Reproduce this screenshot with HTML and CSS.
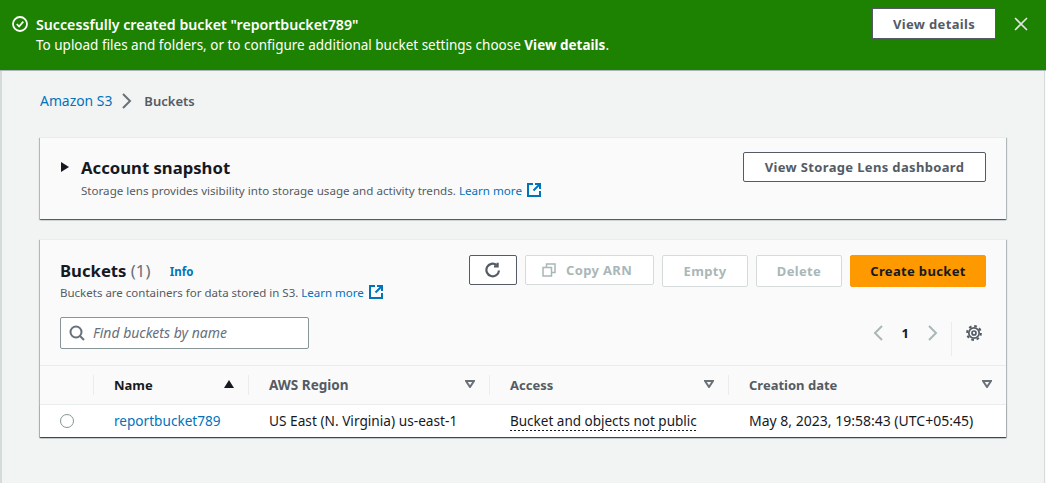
FILE: index.html
```html
<!DOCTYPE html>
<html lang="en">
<head>
    <meta charset="UTF-8">
    <title>S3 Buckets</title>
    <link rel="stylesheet" href="styles.css">
</head>
<body>
    <div class="flash">
        <svg class="flash-icon" width="16" height="16" viewBox="0 0 16 16"><circle cx="8" cy="8" r="7"/><path d="M4.800 8l2.300 2.500 4.200-4.800"/></svg>
        <div class="flash-text">
            <div class="flash-title">Successfully created bucket "reportbucket789"</div>
            <div>To upload files and folders, or to configure additional bucket settings choose <b>View details</b>.</div>
        </div>
        <button class="btn flash-btn">View details</button>
        <svg class="flash-close" width="16" height="16" viewBox="0 0 16 16"><path d="M2 2l12 12M14 2L2 14"/></svg>
    </div>

    <main class="content">
        <nav class="crumbs">
            <a href="#">Amazon S3</a>
            <svg width="12" height="16" viewBox="0 0 12 16"><path d="M2 1l7 7-7 7"/></svg>
            <span>Buckets</span>
        </nav>

        <section class="card snapshot">
            <span class="caret"></span>
            <div class="snapshot-text">
                <h2>Account snapshot</h2>
                <p class="desc">Storage lens provides visibility into storage usage and activity trends. <a href="#">Learn more</a>
                    <svg class="ext" width="16" height="16" viewBox="0 0 16 16"><path d="M7 2H2v12h12V9"/><path d="M9 2h5v5M14 2L7.500 8.500"/></svg>
                </p>
            </div>
            <button class="btn lens-btn">View Storage Lens dashboard</button>
        </section>

        <section class="card buckets">
            <div class="buckets-head">
                <div class="buckets-title">
                    <h2>Buckets <span class="count">(1)</span> <a class="info" href="#">Info</a></h2>
                    <p class="desc">Buckets are containers for data stored in S3. <a href="#">Learn more</a>
                        <svg class="ext" width="16" height="16" viewBox="0 0 16 16"><path d="M7 2H2v12h12V9"/><path d="M9 2h5v5M14 2L7.500 8.500"/></svg>
                    </p>
                </div>
                <div class="actions">
                    <button class="btn refresh"><svg width="16" height="16" viewBox="0 0 16 16"><path d="M14 8.500A6.300 6.300 0 1 1 11.600 3"/><path d="M12.600 .8v3.600H9"/></svg></button>
                    <button class="btn off copy"><svg width="14" height="14" viewBox="0 0 14 14"><path d="M1 4.500h8.500v8.500H1z"/><path d="M4.500 4.500V1H13v8.500H9.500"/></svg>Copy ARN</button>
                    <button class="btn off empty">Empty</button>
                    <button class="btn off delete">Delete</button>
                    <button class="btn create">Create bucket</button>
                </div>
            </div>

            <div class="tools">
                <div class="search">
                    <svg width="16" height="16" viewBox="0 0 16 16"><circle cx="7" cy="7" r="5.500"/><path d="M11 11l4 4"/></svg>
                    <span>Find buckets by name</span>
                </div>
                <div class="pager">
                    <svg width="10" height="16" viewBox="0 0 10 16"><path d="M9 1L2 8l7 7"/></svg>
                    <b>1</b>
                    <svg width="10" height="16" viewBox="0 0 10 16"><path d="M1 1l7 7-7 7"/></svg>
                    <span class="pager-gear">
                        <svg width="16" height="16" viewBox="0 0 16 16"><circle class="teeth" cx="8" cy="8" r="6.900"/><circle cx="8" cy="8" r="5.200"/><circle cx="8" cy="8" r="2"/></svg>
                    </span>
                </div>
            </div>

            <div class="row head-row">
                <div class="cell pick"></div>
                <div class="cell name">
                    <span class="sep"></span><b>Name</b>
                    <svg class="sort" width="10" height="8" viewBox="0 0 10 8"><path class="solid" d="M5 0l5 8H0z"/></svg>
                </div>
                <div class="cell region">
                    <span class="sep"></span><b>AWS Region</b>
                    <svg class="sort" width="10" height="8" viewBox="0 0 10 8"><path d="M1 1h8L5 7z"/></svg>
                </div>
                <div class="cell access">
                    <span class="sep"></span><b>Access</b>
                    <svg class="sort" width="10" height="8" viewBox="0 0 10 8"><path d="M1 1h8L5 7z"/></svg>
                </div>
                <div class="cell created">
                    <span class="sep"></span><b>Creation date</b>
                    <svg class="sort" width="10" height="8" viewBox="0 0 10 8"><path d="M1 1h8L5 7z"/></svg>
                </div>
            </div>
            <div class="row body-row">
                <div class="cell pick"><span class="radio"></span></div>
                <div class="cell name"><a href="#">reportbucket789</a></div>
                <div class="cell region">US East (N. Virginia) us-east-1</div>
                <div class="cell access"><span class="dotted">Bucket and objects not public</span></div>
                <div class="cell created">May 8, 2023, 19:58:43 (UTC+05:45)</div>
            </div>
        </section>
    </main>
</body>
</html>
```

FILE: styles.css
```css
html,
body {
    margin: 0;
    height: 483px;
    overflow: hidden;
}

body {
    font-family: "Noto Sans", sans-serif;
    font-size: 13.500px;
    line-height: 20px;
    color: #16191f;
    background-color: #fafafa;
}

a {
    color: #0073bb;
    text-decoration: none;
}

svg {
    fill: none;
    stroke-width: 2;
    flex: none;
}

button {
    font-family: inherit;
}

.btn {
    display: flex;
    align-items: center;
    justify-content: center;
    height: 30px;
    padding: 0;
    background-color: #fff;
    border: 1px solid #545b64;
    border-radius: 2px;
    color: #545b64;
    font-size: 13px;
    font-weight: 700;
    letter-spacing: 0.35px;
    box-sizing: border-box;
}

/* flash */
.flash {
    display: flex;
    height: 71px;
    padding: 8px 17px 0 12px;
    box-sizing: border-box;
    background-color: #1d8102;
    color: #fff;
    border-bottom: 1px solid #aab7b8;
    font-size: 13.500px;
}

.flash-icon {
    stroke: #fff;
    margin: 8px 8px 0 0;
    stroke-width: 1.800;
}

.flash-text {
    flex: 1;
    padding-top: 6px;
    line-height: 21px;
}

.flash-title {
    font-size: 14.200px;
    font-weight: 600;
}

.flash-btn {
    width: 124px;
    height: 31px;
    margin-right: 17px;
    border-radius: 0;
}

.flash-close {
    stroke: #e6e6e6;
    margin-top: 8px;
    stroke-width: 1.600;
}

/* page */
.content {
    height: 412px;
    margin-right: 1px;
    padding: 20px 38px 0 38px;
    box-sizing: border-box;
    background-color: #f2f3f3;
    border-left: 2px solid #d5dbdb;
    border-right: 1px solid #d5dbdb;
}

.crumbs {
    display: flex;
    align-items: center;
    gap: 9px;
    height: 20px;
    font-size: 13.900px;
}

.crumbs svg {
    stroke: #687078;
    margin-right: 2px;
}

.crumbs span {
    color: #545b64;
    font-size: 13px;
    font-weight: 600;
}

.card {
    background-color: #fafafa;
    box-shadow: 0 1px 1px 0 rgba(0, 28, 36, 0.5), 1px 1px 1px 0 rgba(0, 28, 36, 0.2), -1px 1px 1px 0 rgba(0, 28, 36, 0.2);
    border-top: 1px solid #eaeded;
}

h2 {
    margin: 0;
    font-size: 16.700px;
    line-height: 24px;
    font-weight: 700;
}

.desc {
    margin: 0;
    font-size: 11.600px;
    line-height: 16px;
    color: #545b64;
}

.ext {
    stroke: #0073bb;
    vertical-align: -3px;
    margin-left: 1px;
}

/* account snapshot */
.snapshot {
    display: flex;
    height: 82px;
    margin-top: 26px;
    box-sizing: border-box;
}

.caret {
    width: 0;
    height: 0;
    margin: 24px 12px 0 21px;
    border-left: 8px solid #16191f;
    border-top: 5px solid transparent;
    border-bottom: 5px solid transparent;
}

.snapshot-text {
    flex: 1;
    padding-top: 18px;
}

.snapshot-text .desc {
    margin-top: 2px;
}

.lens-btn {
    width: 243px;
    margin: 14px 20px 0 0;
}

/* buckets */
.buckets {
    height: 198px;
    margin-top: 20px;
    box-sizing: border-box;
}

.buckets-head {
    display: flex;
    padding: 15px 20px 0;
    height: 63px;
    box-sizing: border-box;
}

.buckets-title {
    flex: 1;
    padding-top: 4px;
}

.buckets-title .desc {
    font-size: 11.500px;
}

.count {
    font-weight: 400;
    color: #687078;
}

.info {
    margin-left: 15px;
    font-size: 11.500px;
    font-weight: 700;
    vertical-align: 1px;
}

.actions {
    display: flex;
    align-items: flex-start;
    gap: 8px;
}

.off {
    color: #aab7b8;
    border-color: #d5dbdb;
    height: 32px;
}

.refresh {
    width: 48px;
}

.refresh svg {
    stroke: #545b64;
    stroke-width: 2.200;
}

.copy {
    justify-content: flex-start;
    width: 129px;
    height: 30px;
    padding-left: 16px;
}

.copy svg {
    stroke: #aab7b8;
    stroke-width: 1.500;
    margin-right: 10px;
}

.empty,
.delete {
    width: 86px;
}

.create {
    width: 136px;
    height: 32px;
    background-color: #ff9900;
    border-color: #ff9900;
    color: #16191f;
}

.tools {
    display: flex;
    justify-content: space-between;
    align-items: center;
    padding: 0 24px 0 20px;
    height: 32px;
    margin-top: 14px;
}

.search {
    display: flex;
    align-items: center;
    gap: 8px;
    width: 249px;
    height: 32px;
    padding-left: 8px;
    box-sizing: border-box;
    background-color: #fff;
    border: 1px solid #879596;
    border-radius: 2px;
    color: #687078;
    font-size: 14px;
    font-style: italic;
}

.search svg {
    stroke: #687078;
}

.pager {
    display: flex;
    align-items: center;
    font-size: 13px;
}

.pager svg {
    stroke: #aab7b8;
}

.pager b {
    margin: 0 19px;
}

.pager-gear {
    display: flex;
    align-items: center;
    height: 34px;
    margin: 12px 0 0 13px;
    padding-left: 14px;
    border-left: 1px solid #eaeded;
}

.pager-gear svg {
    stroke: #545b64;
    stroke-width: 1.700;
    margin-top: -12px;
}

.pager-gear .teeth {
    stroke-width: 2;
    stroke-dasharray: 2.700 2.720;
}

/* table */
.row {
    display: grid;
    grid-template-columns: 53px 155px 241px 239px 278px;
}

.head-row {
    height: 40px;
    margin-top: 16px;
    box-sizing: border-box;
    border-top: 1px solid #eaeded;
    border-bottom: 1px solid #eaeded;
    font-size: 13px;
}

.body-row {
    height: 32px;
    background-color: #fff;
    font-size: 13.600px;
    box-shadow: 0 1px 1px 0 rgba(0, 28, 36, 0.3);
}

.cell {
    position: relative;
    display: flex;
    align-items: center;
    justify-content: space-between;
    padding: 0 14px 0 21px;
}

.head-row b {
    color: #545b64;
    font-weight: 700;
}

.head-row .region b {
    font-size: 13.500px;
}

.head-row .name b {
    color: #16191f;
}

.sep {
    position: absolute;
    left: 0;
    top: 9px;
    height: 20px;
    border-left: 1px solid #eaeded;
}

.sort {
    stroke: #687078;
    margin-top: -2px;
}

.sort .solid {
    fill: #16191f;
    stroke: none;
}

.pick {
    padding: 0 0 0 20px;
    justify-content: flex-start;
}

.radio {
    width: 12px;
    height: 12px;
    border: 1px solid #879596;
    border-radius: 50%;
    background-color: #fff;
}

.body-row .region {
    font-size: 13.700px;
}

.body-row .access {
    font-size: 13.500px;
}

.body-row .created {
    font-size: 14px;
}

.dotted {
    padding-bottom: 1px;
    line-height: 18px;
    background: repeating-linear-gradient(90deg, #16191f 0 2px, transparent 2px 4px) bottom / 100% 1px no-repeat;
}
```
